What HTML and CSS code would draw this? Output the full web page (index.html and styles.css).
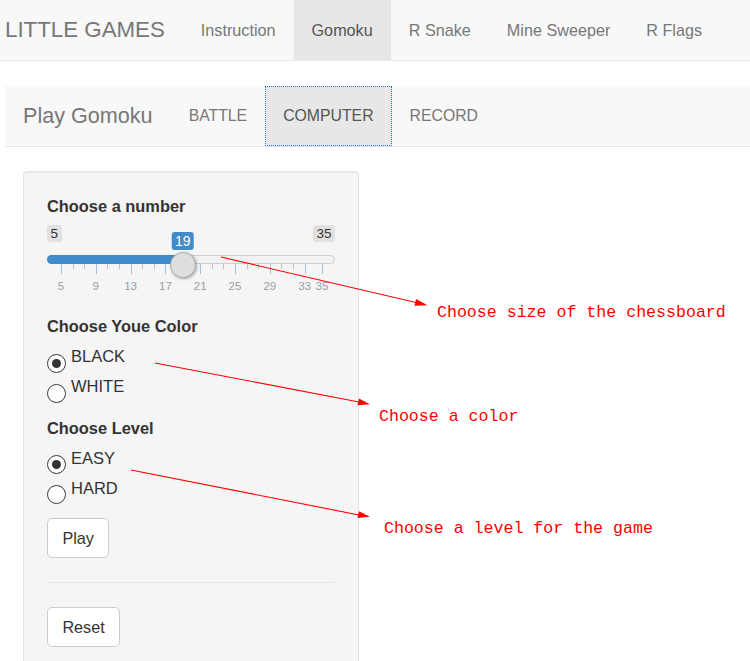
FILE: index.html
```html
<!DOCTYPE html>
<html>
<head>
<meta charset="utf-8">
<title>Little Games</title>
<link rel="stylesheet" href="styles.css">
</head>
<body>
<nav class="topbar">
  <span class="brand brand-top">LITTLE GAMES</span>
  <ul class="nav">
    <li><a>Instruction</a></li>
    <li class="active"><a>Gomoku</a></li>
    <li><a>R Snake</a></li>
    <li><a>Mine Sweeper</a></li>
    <li><a>R Flags</a></li>
  </ul>
</nav>
<main class="page">
  <nav class="subbar">
    <span class="brand brand-sub">Play Gomoku</span>
    <ul class="nav nav-sub">
      <li><a>BATTLE</a></li>
      <li class="active focused"><a>COMPUTER</a></li>
      <li><a>RECORD</a></li>
    </ul>
  </nav>
  <div class="content">
    <div class="panel">
      <div class="group group-slider">
        <div class="control-label">Choose a number</div>
        <div class="slider">
          <div class="limits"><span class="lim">5</span><span class="lim">35</span></div>
          <div class="track"><div class="bar" style="width:135.8px"></div></div>
          <div class="grid">
            <span class="tick major" style="left:14px"></span>
            <span class="tick" style="left:25.6px"></span>
            <span class="tick" style="left:37.2px"></span>
            <span class="tick major" style="left:48.8px"></span>
            <span class="tick" style="left:60.4px"></span>
            <span class="tick" style="left:72px"></span>
            <span class="tick major" style="left:83.6px"></span>
            <span class="tick" style="left:95.2px"></span>
            <span class="tick" style="left:106.8px"></span>
            <span class="tick major" style="left:118.4px"></span>
            <span class="tick" style="left:130px"></span>
            <span class="tick" style="left:141.6px"></span>
            <span class="tick major" style="left:153.2px"></span>
            <span class="tick" style="left:164.8px"></span>
            <span class="tick" style="left:176.4px"></span>
            <span class="tick major" style="left:188px"></span>
            <span class="tick" style="left:199.6px"></span>
            <span class="tick" style="left:211.2px"></span>
            <span class="tick major" style="left:222.8px"></span>
            <span class="tick" style="left:234.4px"></span>
            <span class="tick" style="left:246px"></span>
            <span class="tick major" style="left:257.6px"></span>
            <span class="tick major" style="left:275px"></span>
            <span class="grid-text" style="left:14px">5</span>
            <span class="grid-text" style="left:48.8px">9</span>
            <span class="grid-text" style="left:83.6px">13</span>
            <span class="grid-text" style="left:118.4px">17</span>
            <span class="grid-text" style="left:153.2px">21</span>
            <span class="grid-text" style="left:188px">25</span>
            <span class="grid-text" style="left:222.8px">29</span>
            <span class="grid-text" style="left:257.6px">33</span>
            <span class="grid-text" style="left:275px">35</span>
          </div>
          <span class="bubble" style="left:135.8px">19</span>
          <span class="handle" style="left:122.8px"></span>
        </div>
      </div>

      <div class="group">
        <div class="control-label">Choose Youe Color</div>
        <div class="radio"><span class="circle checked"></span><span class="radio-text">BLACK</span></div>
        <div class="radio"><span class="circle"></span><span class="radio-text">WHITE</span></div>
      </div>

      <div class="group">
        <div class="control-label">Choose Level</div>
        <div class="radio"><span class="circle checked"></span><span class="radio-text">EASY</span></div>
        <div class="radio"><span class="circle"></span><span class="radio-text">HARD</span></div>
      </div>

      <button class="btn" type="button">Play</button>
      <hr class="divider">
      <button class="btn" type="button">Reset</button>
    </div>
  </div>
</main>

<div class="annotations">
  <svg class="arrows" width="750" height="661" viewBox="0 0 750 661">
    <line x1="221" y1="257" x2="416" y2="302.5" stroke="#ff0000" stroke-width="1.1"/>
    <polygon points="416.1,298.9 414.5,305.7 427.5,305.2" fill="#ff0000"/>
    <line x1="155" y1="363" x2="359" y2="402" stroke="#ff0000" stroke-width="1.1"/>
    <polygon points="358.9,398.4 357.6,405.2 370,404.3" fill="#ff0000"/>
    <line x1="131" y1="470" x2="359" y2="515" stroke="#ff0000" stroke-width="1.1"/>
    <polygon points="358.9,511.3 357.5,518.1 370,516.8" fill="#ff0000"/>
  </svg>
  <div class="note note-1">Choose size of the chessboard</div>
  <div class="note note-2">Choose a color</div>
  <div class="note note-3">Choose a level for the game</div>
</div>
</body>
</html>
```

FILE: styles.css
```css
html, body {
  margin: 0;
  padding: 0;
  overflow: hidden;
  background: #ffffff;
}

body {
  font-family: "Liberation Sans", Arial, sans-serif;
  font-size: 16.8px;
  color: #333333;
  position: relative;
  width: 750px;
  height: 661px;
}

/* ---------- navbars ---------- */
.topbar,
.subbar {
  display: flex;
  align-items: stretch;
  height: 60px;
  background: #f8f8f8;
  border-bottom: 1px solid #e7e7e7;
}

.subbar {
  margin: 25px 0 0 5px;
}

.brand {
  font-size: 21.6px;
  line-height: 24px;
  color: #777777;
  padding: 18px 18px;
}

.brand-top {
  padding-left: 5px;
  font-size: 22.3px;
}

.nav {
  display: flex;
  list-style: none;
  margin: 0;
  padding: 0;
}

.nav li {
  display: flex;
}

.nav a {
  display: block;
  padding: 18px 18px;
  line-height: 24px;
  color: #777777;
  font-size: 16.2px;
}

.nav-sub a {
  font-size: 15.8px;
}

.nav li.active a {
  background: #e7e7e7;
  color: #555555;
}

.nav li.focused a {
  outline: 1px dotted #1c74d4;
  outline-offset: -1px;
}

/* ---------- content ---------- */
.content {
  padding: 24px 0 0 23px;
}

.panel {
  box-sizing: border-box;
  width: 336px;
  padding: 23px;
  background: #f5f5f5;
  border: 1px solid #e3e3e3;
  border-radius: 4px;
  box-shadow: inset 0 1px 1px rgba(0, 0, 0, 0.05);
}

.control-label {
  font-weight: bold;
  font-size: 16.4px;
  line-height: 23px;
  color: #333333;
}

.group {
  margin-bottom: 12.5px;
}

.group-slider {
  margin-bottom: 21px;
}

/* ---------- slider ---------- */
.slider {
  position: relative;
  width: 288px;
}

.limits {
  display: flex;
  justify-content: space-between;
  margin-top: 7px;
  height: 17px;
}

.lim {
  display: block;
  background: #e1e1e1;
  color: #333333;
  font-size: 13.5px;
  line-height: 17px;
  padding: 0 3.5px;
  border-radius: 3px;
}

.track {
  position: relative;
  box-sizing: border-box;
  margin-top: 13px;
  height: 9px;
  background: #f2f2f2;
  border: 1px solid #cfcfcf;
  border-radius: 5px;
}

.bar {
  position: absolute;
  left: -1px;
  top: -1px;
  bottom: -1px;
  background: #428bca;
  border-radius: 5px 0 0 5px;
}

.grid {
  position: relative;
  height: 30px;
}

.tick {
  position: absolute;
  top: 0;
  width: 1px;
  height: 5px;
  background: #c2c2c2;
}

.tick.major {
  height: 10px;
  background: #9dbfe0;
}

.grid-text {
  position: absolute;
  top: 15px;
  transform: translateX(-50%);
  font-size: 11.5px;
  line-height: 14px;
  color: #9a9ea6;
  white-space: nowrap;
}

.bubble {
  position: absolute;
  top: 7px;
  transform: translateX(-50%);
  background: #428bca;
  color: #ffffff;
  font-size: 14px;
  line-height: 18px;
  padding: 0 3.5px;
  border-radius: 3px;
}

.handle {
  position: absolute;
  top: 27px;
  box-sizing: border-box;
  width: 26px;
  height: 26px;
  border-radius: 50%;
  background: #dedede;
  border: 1px solid #ababab;
  box-shadow: 1px 1px 3px rgba(0, 0, 0, 0.3);
}

/* ---------- radios ---------- */
.radio {
  display: flex;
  align-items: flex-start;
  height: 30px;
}

.group .control-label + .radio {
  margin-top: 6px;
}

.circle {
  box-sizing: border-box;
  width: 19px;
  height: 19px;
  margin-top: 9.5px;
  border: 1.3px solid #3a3a3a;
  border-radius: 50%;
  background: #ffffff;
  display: flex;
  align-items: center;
  justify-content: center;
}

.circle.checked::after {
  content: "";
  width: 9px;
  height: 9px;
  border-radius: 50%;
  background: #333333;
}

.radio-text {
  margin-left: 5px;
  line-height: 24px;
  font-size: 16.5px;
  color: #333333;
}

/* ---------- buttons ---------- */
.btn {
  display: block;
  font-family: "Liberation Sans", Arial, sans-serif;
  font-size: 16.2px;
  line-height: 24px;
  color: #333333;
  background: #ffffff;
  border: 1px solid #cccccc;
  border-radius: 5px;
  padding: 7px 14.4px;
}

.divider {
  margin: 24px 0;
  border: 0;
  border-top: 1px solid #e6e6e6;
}

/* ---------- annotations ---------- */
.annotations {
  position: absolute;
  left: 0;
  top: 0;
  width: 750px;
  height: 661px;
  pointer-events: none;
}

.arrows {
  position: absolute;
  left: 0;
  top: 0;
}

.note {
  position: absolute;
  font-family: "Liberation Mono", "Courier New", monospace;
  font-size: 16.6px;
  line-height: 20px;
  color: #ff0000;
  white-space: nowrap;
}

.note-1 { left: 437px; top: 303px; }
.note-2 { left: 379px; top: 407px; }
.note-3 { left: 384px; top: 519px; }
```
